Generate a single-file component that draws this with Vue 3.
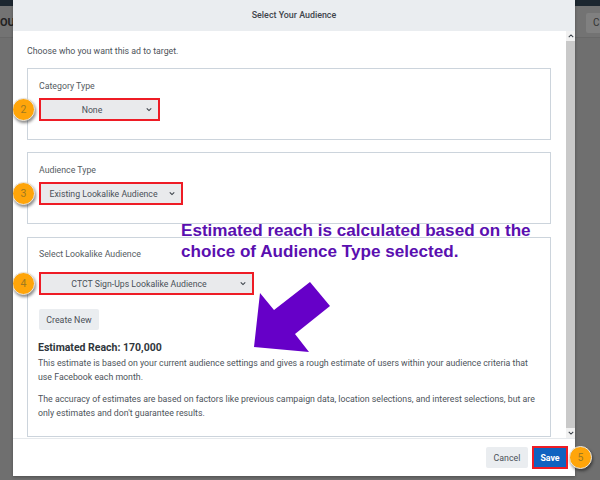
<script setup>
const reachNotes = [
  'This estimate is based on your current audience settings and gives a rough estimate of users within your audience criteria that use Facebook each month.',
  "The accuracy of estimates are based on factors like previous campaign data, location selections, and interest selections, but are only estimates and don't guarantee results."
]
</script>

<template>
  <div class="page">
    <div class="topbar"></div>
    <div class="navbar">
      <span class="nav-left">OU</span>
      <span class="nav-btn">C</span>
    </div>

    <div class="modal">
      <header class="modal-head">Select Your Audience</header>
      <div class="modal-main">
        <div class="modal-body">
          <p class="intro">Choose who you want this ad to target.</p>

          <section class="card short">
            <div class="label">Category Type</div>
            <div class="select-row">
              <span class="badge">2</span>
              <div class="select w-none"><span class="val">None</span><svg class="chev" viewBox="0 0 8 6"><path d="M1 1.5 4 4.5 7 1.5" /></svg></div>
            </div>
          </section>

          <section class="card short">
            <div class="label">Audience Type</div>
            <div class="select-row">
              <span class="badge">3</span>
              <div class="select w-type"><span class="val">Existing Lookalike Audience</span><svg class="chev" viewBox="0 0 8 6"><path d="M1 1.5 4 4.5 7 1.5" /></svg></div>
            </div>
          </section>

          <section class="card tall">
            <div class="label">Select Lookalike Audience</div>
            <div class="select-row row-look">
              <span class="badge">4</span>
              <div class="select w-look"><span class="val">CTCT Sign-Ups Lookalike Audience</span><svg class="chev" viewBox="0 0 8 6"><path d="M1 1.5 4 4.5 7 1.5" /></svg></div>
            </div>
            <button class="create">Create New</button>
            <h3 class="reach">Estimated Reach: 170,000</h3>
            <p v-for="n in reachNotes" :key="n" class="note">{{ n }}</p>
          </section>
        </div>
        <div class="scrollbar">
          <svg class="sb-arrow" viewBox="0 0 8 6"><path d="M1 4.5 4 1.5 7 4.5" /></svg>
          <div class="sb-thumb"></div>
          <svg class="sb-arrow" viewBox="0 0 8 6"><path d="M1 1.5 4 4.5 7 1.5" /></svg>
        </div>
      </div>
      <footer class="modal-foot">
        <button class="cancel">Cancel</button>
        <button class="save">Save</button>
        <span class="badge badge-five">5</span>
      </footer>
    </div>

    <div class="callout">Estimated reach is calculated based on the choice of Audience Type selected.</div>
    <svg class="arrow" viewBox="0 0 600 480"><polygon points="254,347 260,293 274,310 310,282 330,306 295,334 309,352" /></svg>
  </div>
</template>

<style>
html, body { margin: 0; background: #6f6f6f; }
</style>

<style scoped>
.page {
  position: relative;
  width: 600px;
  height: 480px;
  overflow: hidden;
  background: #6f6f6f;
  font-family: Roboto, "Liberation Sans", sans-serif;
  color: #4a5058;
}
.topbar { position: absolute; left: 0; top: 0; width: 100%; height: 6px; background: #1d2730; }
.navbar {
  position: absolute; left: 0; top: 6px; width: 100%; height: 32px;
  background: #737373; border-bottom: 1px solid #686868; box-sizing: border-box;
}
.nav-left { position: absolute; left: 0; top: 10px; font-size: 11px; font-weight: 700; color: #222; }
.nav-btn {
  position: absolute; left: 586px; top: 7px; width: 30px; height: 20px; background: #808080;
  font-size: 10px; line-height: 20px; padding-left: 7px; box-sizing: border-box; color: #333; border-radius: 2px;
}
.modal {
  position: absolute; left: 13px; top: 0; width: 562px; height: 476px;
  background: #fff; display: flex; flex-direction: column;
  box-shadow: 0 1px 3px rgba(0,0,0,.3);
}
.modal-head {
  height: 31px; flex: none; background: #eaedf0; text-align: center;
  font-size: 8.9px; font-weight: 500; line-height: 30px; color: #3f454c;
}
.modal-main { height: 407px; flex: none; display: flex; border-bottom: 1px solid #e6e9ec; }
.modal-body { flex: 1; padding: 15px 15px 0 14px; min-width: 0; overflow: hidden; }
.intro { margin: 0 0 12px; font-size: 8.77px; line-height: 10px; color: #4d535a; }
.card {
  border: 1px solid #ccd4dc; box-sizing: border-box; padding: 12px 11px; margin-bottom: 12px; background: #fff;
}
.short { height: 72px; }
.tall { height: 200px; margin-bottom: 0; padding-top: 11px; margin-top: 13px; }
.label { font-size: 8.77px; line-height: 11px; color: #555b62; }
.select-row { position: relative; margin-top: 6px; height: 23px; }
.row-look { margin-top: 12px; }
.select {
  height: 23px; box-sizing: border-box; border: 2px solid #ee1c25; background: #e9eaec;
  font-size: 8.72px; color: #4a5058; display: flex; align-items: center;
  padding: 0 6px 0 0;
}
.val { flex: 1; text-align: center; padding-right: 3px; }
.chev { width: 6px; height: 5px; flex: none; }
.chev path, .sb-arrow path { fill: none; stroke: #3a4048; stroke-width: 1.4; }
.w-none { width: 121px; }
.w-type { width: 144px; }
.w-look { width: 215px; }
.badge {
  position: absolute; left: -27px; top: 0; width: 21px; height: 21px; border-radius: 50%;
  background: #ffa50a; border: 1px solid #e8e8e8; box-shadow: 1px 2px 3px rgba(0,0,0,.45);
  font-size: 10.5px; line-height: 21px; text-align: center; color: #a07a20;
}
.create {
  display: block; margin: 14px 0 0; width: 60px; height: 21px; padding: 0; border: 0; border-radius: 2px;
  background: #eaedf0; font: 8.8px Roboto, sans-serif; color: #4a5058;
}
.reach { margin: 11px 0 0 -1px; font-size: 10.5px; font-weight: 700; line-height: 14px; color: #30363c; }
.note { margin: 2px 0 9px -1px; font-size: 8.77px; line-height: 13.6px; color: #4d535a; }
.scrollbar { width: 9px; flex: none; background: #f1f1f1; display: flex; flex-direction: column; align-items: center; }
.sb-arrow { width: 6px; height: 10px; flex: none; }
.sb-thumb { flex: 1; width: 100%; background: #c9c9c9; }
.modal-foot {
  flex: 1; display: flex; justify-content: flex-end; align-items: center; gap: 4px; padding: 0 7px 0 0; position: relative;
}
.cancel {
  width: 42px; height: 21px; border: 0; border-radius: 2px; background: #eaedf0; padding: 0;
  font: 8.8px Roboto, sans-serif; color: #4a5058;
}
.save {
  width: 36px; height: 23px; box-sizing: border-box; border: 2px solid #ee1c25; background: #0f62c0; padding: 0;
  font: 700 8.8px Roboto, sans-serif; color: #fff;
}
.badge-five { left: auto; right: -17px; top: 7px; }
.callout {
  position: absolute; left: 181px; top: 220px; width: 370px;
  font: 700 17.1px/21px "Liberation Sans", Arial, sans-serif; color: #5a0fb0;
}
.arrow { position: absolute; left: 0; top: 0; width: 600px; height: 480px; pointer-events: none; }
.arrow polygon { fill: #6600c8; }
</style>
